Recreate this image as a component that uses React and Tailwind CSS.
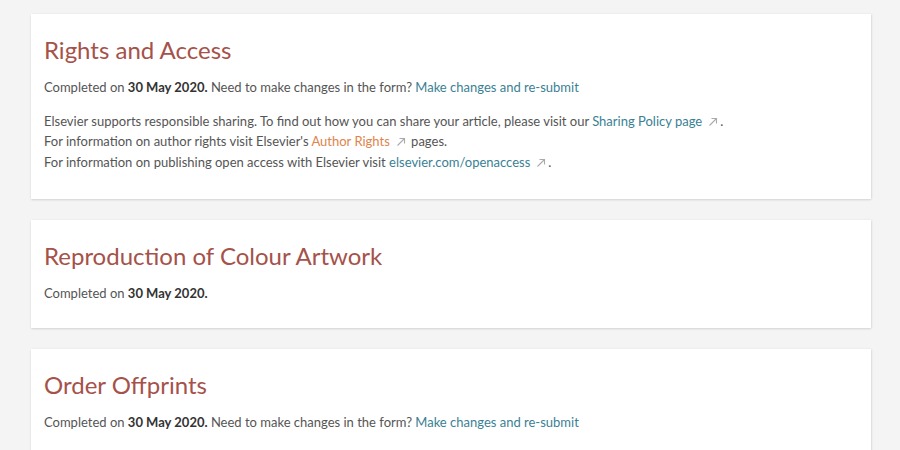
import React from 'react'

function ExtArrow() {
  return (
    <svg width="10" height="10" viewBox="0 0 10 10" className="inline-block ml-[6px] mr-[2px] align-[-1px]" fill="none" stroke="#aaaaaa" strokeWidth="1.1">
      <path d="M1.5 8.5 L8.5 1.5" />
      <path d="M3.5 1.5 H8.5 V6.5" />
    </svg>
  )
}

function Card({ title, children, pb }) {
  return (
    <section className={`w-[840px] bg-white shadow-[0_1px_2px_rgba(0,0,0,0.12),1px_0_2px_rgba(0,0,0,0.06)] px-[13px] pt-[20px] ${pb}`}>
      <h2 className="text-[24px] leading-[32px] text-[#a5524a]">{title}</h2>
      {children}
    </section>
  )
}

function Completed({ resubmit }) {
  return (
    <p className="mt-[11px]">
      Completed on <b className="font-bold text-[#333]">30 May 2020.</b>
      {resubmit && (
        <>
          {' '}Need to make changes in the form?{' '}
          <a className="text-[#3a7f94]" href="#">Make changes and re-submit</a>
        </>
      )}
    </p>
  )
}

export default function App() {
  return (
    <div className="min-h-[450px] bg-[#f4f4f4] pt-[14px] pl-[31px] text-[13px] leading-[20.5px] text-[#555]" style={{ fontFamily: 'Lato, "Open Sans", sans-serif' }}>
      <div className="flex flex-col gap-[21px]">
        <Card title="Rights and Access" pb="pb-[27px]">
          <Completed resubmit />
          <div className="mt-[13px]">
            <p>
              Elsevier supports responsible sharing. To find out how you can share your article, please visit our{' '}
              <a className="text-[#3a7f94]" href="#">Sharing Policy page</a>
              <ExtArrow />.
            </p>
            <p>
              For information on author rights visit Elsevier's{' '}
              <a className="text-[#e0834a]" href="#">Author Rights</a>
              <ExtArrow /> pages.
            </p>
            <p>
              For information on publishing open access with Elsevier visit{' '}
              <a className="text-[#3a7f94]" href="#">elsevier.com/openaccess</a>
              <ExtArrow />.
            </p>
          </div>
        </Card>
        <Card title="Reproduction of Colour Artwork" pb="pb-[24px]">
          <Completed />
        </Card>
        <Card title="Order Offprints" pb="pb-[24px]">
          <Completed resubmit />
        </Card>
      </div>
    </div>
  )
}
